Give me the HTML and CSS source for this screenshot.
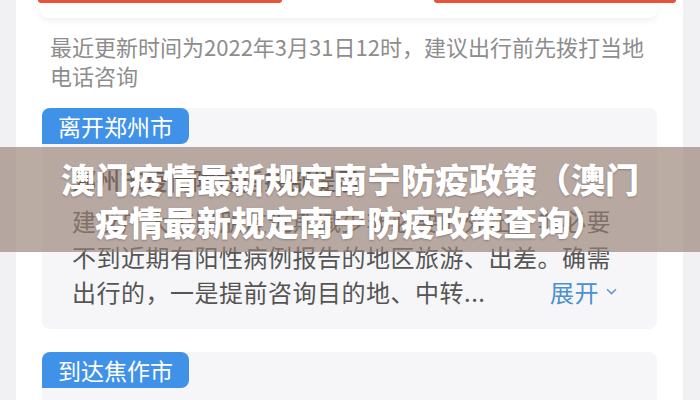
FILE: index.html
```html
<!DOCTYPE html>
<html lang="zh-CN">
<head>
    <meta charset="UTF-8">
    <meta name="viewport" content="width=device-width, initial-scale=1.0">
    <title>澳门疫情最新规定南宁防疫政策</title>
    <link rel="stylesheet" href="styles.css">
</head>
<body>
    <div class="screen">
        <div class="panel">
            <div class="top-card">
                <div class="btn-row">
                    <span class="red-bar"></span>
                    <span class="red-bar wide"></span>
                </div>
            </div>

            <p class="note">最近更新时间为2022年3月31日12时，建议出行前先拨打当地电话咨询</p>

            <!-- Leaving -->
            <div class="policy">
                <span class="tag">离开郑州市</span>
                <div class="policy-body">
                    <div class="policy-title">郑州市疫情防控指挥部提示</div>
                    <p class="policy-text">建议广大市民朋友近期减少非必要的外出，非必要不到近期有阳性病例报告的地区旅游、出差。确需</p>
                    <div class="last-line">
                        <span>出行的，一是提前咨询目的地、中转...</span>
                        <span class="more">展开
                            <svg width="11" height="7" viewBox="0 0 11 7"><path d="M1 1.2 5.5 5.6 10 1.2" fill="none" stroke="#5a9bd6" stroke-width="1.5"/></svg>
                        </span>
                    </div>
                </div>
            </div>

            <!-- Arriving -->
            <div class="policy">
                <span class="tag">到达焦作市</span>
                <div class="policy-body"></div>
            </div>
        </div>

        <div class="title-banner">
            <h1>澳门疫情最新规定南宁防疫政策（澳门<br>疫情最新规定南宁防疫政策查询）</h1>
        </div>
    </div>
</body>
</html>
```

FILE: styles.css
```css
/* Global */
body {
    margin: 0;
    background: #f1f1f3;
    font-family: "Noto Sans CJK SC", "Noto Sans", sans-serif;
}

.screen {
    position: relative;
    width: 700px;
    height: 400px;
    overflow: hidden;
}

.panel {
    margin: 0 17px 0 16px;
    height: 400px;
    background: #ffffff;
    overflow: hidden;
}

/* Top card with buttons cut off */
.top-card {
    margin: 0 26px 0 24px;
    height: 18px;
    background: #ffffff;
    border-radius: 0 0 8px 8px;
    box-shadow: 0 3px 6px rgba(0, 0, 0, 0.06);
}

.btn-row {
    display: flex;
    justify-content: space-between;
    margin: 0 -19px 0 -2px;
}

.red-bar {
    display: block;
    width: 244px;
    height: 3px;
    background: #e8533a;
    border-radius: 0 0 3px 3px;
}

.red-bar.wide {
    width: 242px;
}

/* Update note */
.note {
    margin: 14px 28px 0 34px;
    font-size: 22px;
    line-height: 29px;
    color: #8d8d8d;
}

/* Policy cards */
.policy {
    margin: 18px 26px 0 26px;
    background: #f6f6f8;
    border-radius: 0 8px 8px 8px;
}

.policy + .policy {
    margin-top: 23px;
}

.tag {
    display: inline-block;
    height: 36px;
    padding: 0 16px;
    background: #3f92e8;
    color: #ffffff;
    font-size: 23px;
    line-height: 36px;
    border-radius: 8px 8px 8px 0;
}

.policy-body {
    padding: 18px 40px 19px 30px;
}

.policy-title {
    font-size: 24px;
    line-height: 36px;
    color: #333333;
    font-weight: 500;
}

.policy-text {
    margin: 5px 0 0;
    width: 545px;
    font-size: 24px;
    letter-spacing: 0.5px;
    line-height: 35.5px;
    color: #555555;
}

.last-line {
    display: flex;
    justify-content: space-between;
    align-items: center;
    font-size: 24px;
    letter-spacing: 0.5px;
    line-height: 35.5px;
    color: #555555;
}

.more {
    display: flex;
    align-items: center;
    gap: 7px;
    color: #4a90d2;
}

/* Title overlay */
.title-banner {
    position: absolute;
    left: 0;
    right: 0;
    top: 147px;
    height: 105px;
    display: flex;
    align-items: center;
    justify-content: center;
    background: rgba(150, 128, 116, 0.66);
}

.title-banner h1 {
    margin: 0;
    font-size: 34px;
    line-height: 43px;
    font-weight: 900;
    color: #ffffff;
    text-align: center;
    text-shadow: 0 1px 2px rgba(0, 0, 0, 0.25);
}
```
